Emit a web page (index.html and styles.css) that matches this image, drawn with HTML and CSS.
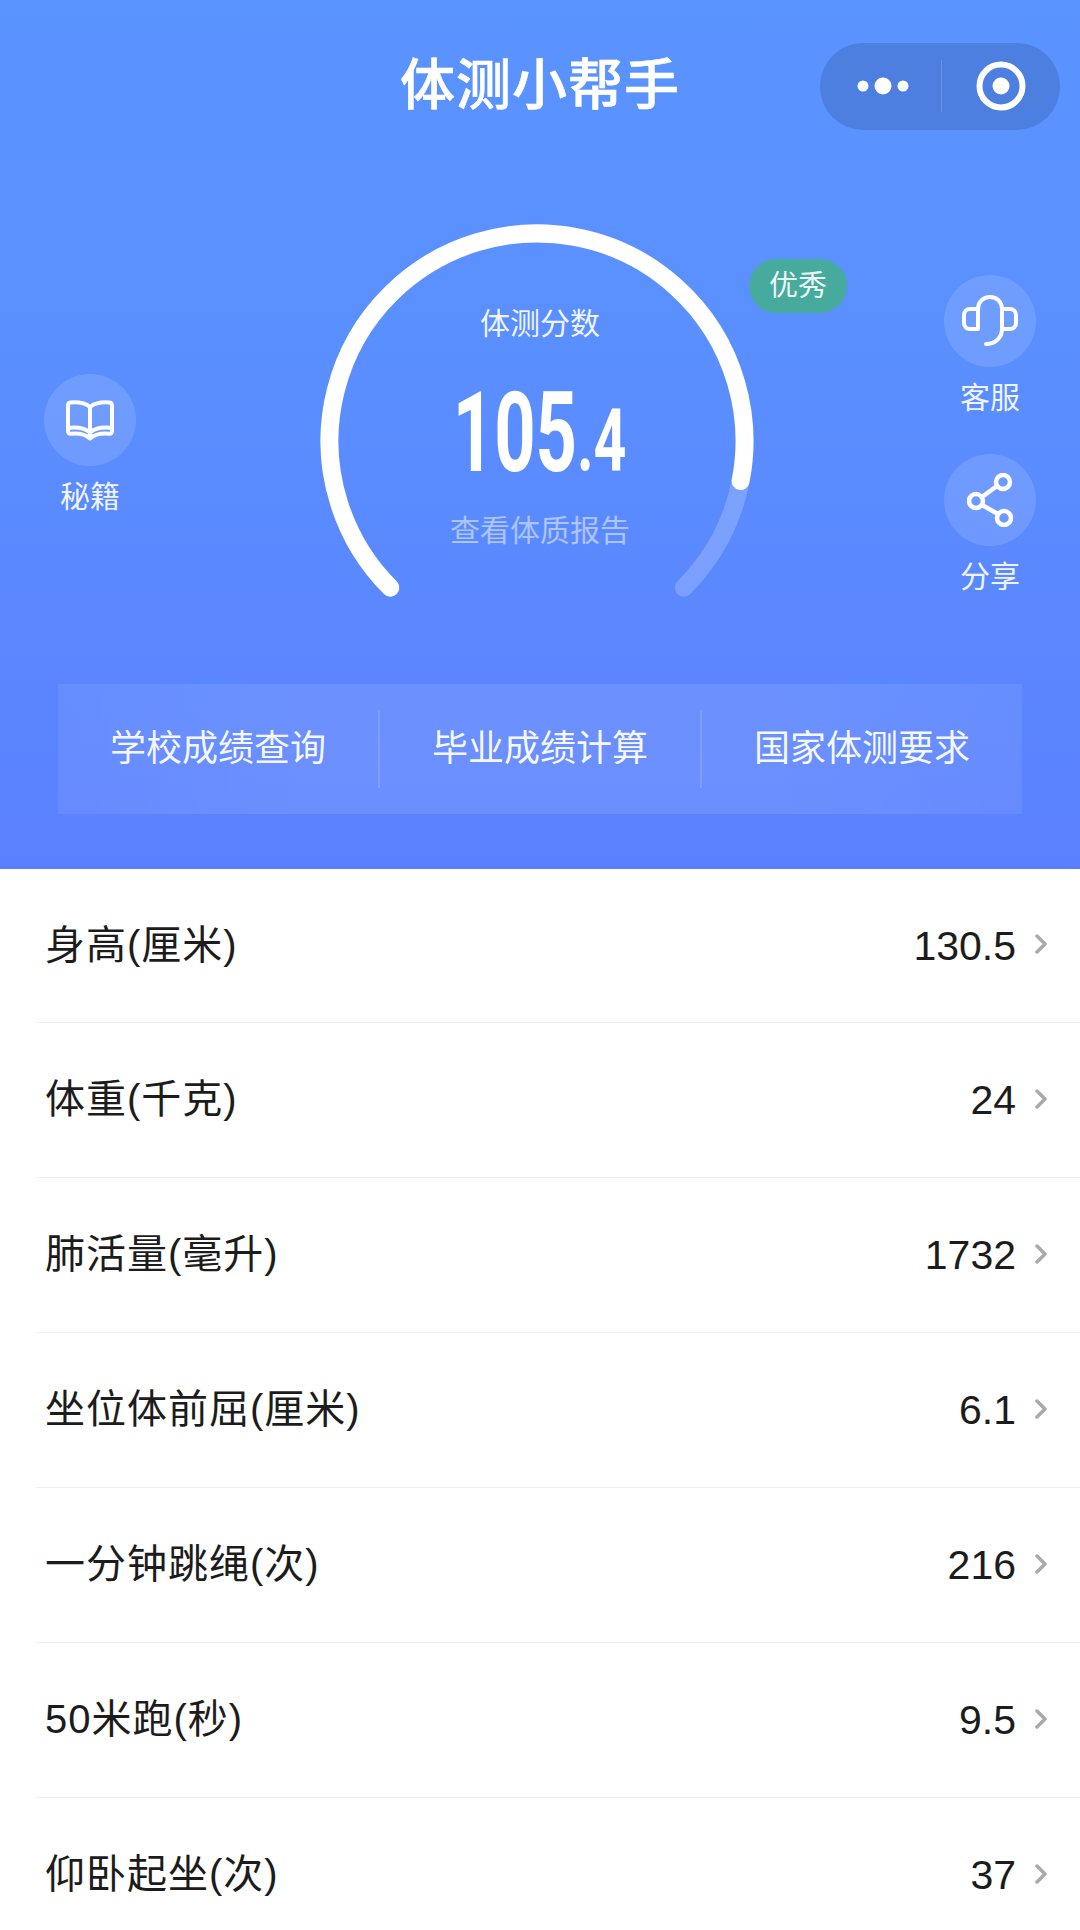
FILE: index.html
```html
<!DOCTYPE html>
<html lang="zh">
<head>
<meta charset="utf-8">
<title>体测小帮手</title>
<link rel="stylesheet" href="styles.css">
</head>
<body>
<div class="page">
  <header class="hero">
    <div class="navbar">
      <h1 class="title">体测小帮手</h1>
      <div class="capsule">
        <svg class="cap-more" viewBox="0 0 54 20"><circle cx="7" cy="10" r="5.500"/><circle cx="27" cy="10" r="8.500"/><circle cx="47" cy="10" r="5.500"/></svg>
        <span class="cap-line"></span>
        <svg class="cap-target" viewBox="0 0 50 50"><circle class="ring" cx="25" cy="25" r="21.500"/><circle class="dot" cx="25" cy="25" r="8.500"/></svg>
      </div>
    </div>
    <div class="stage">
      <div class="side side-left">
        <div class="action">
          <span class="action-icon">
            <svg viewBox="0 0 50 42" class="ico-book"><path d="M25 8C20 4 12 3 5.500 3.500Q3 3.800 3 6.500V32Q3 35 6 34.700C13 34 20 35 25 39.500C30 35 37 34 44 34.700Q47 35 47 32V6.500Q47 3.800 44.500 3.500C38 3 30 4 25 8ZM25 8V39.500M3 29C11 28 20 29.500 25 33.500C30 29.500 39 28 47 29"/></svg>
          </span>
          <span class="action-label">秘籍</span>
        </div>
      </div>
      <div class="gauge">
        <svg class="gauge-svg" viewBox="0 0 460 400">
          <path class="arc-track" d="M430.600 259A207.500 207.500 0 0 1 373.700 365.700"/>
          <path class="arc-value" d="M80.300 365.700A207.500 207.500 0 1 1 430.600 259"/>
        </svg>
        <div class="gauge-text">
          <div class="gauge-caption">体测分数</div>
          <div class="gauge-score"><span class="score-inner">105<span class="score-small">.4</span></span></div>
          <div class="gauge-link">查看体质报告</div>
        </div>
        <span class="badge">优秀</span>
      </div>
      <div class="side side-right">
        <div class="action">
          <span class="action-icon">
            <svg viewBox="0 0 58 52" class="ico-head"><path d="M17 14H9A6 6 0 0 0 3 20V28A6 6 0 0 0 9 34H17ZM17 14C17 7 22 2 29 2C36 2 41 7 41 14V34C41 42 35 49 25 49M41 14H49A6 6 0 0 1 55 20V28A6 6 0 0 1 49 34H41"/></svg>
          </span>
          <span class="action-label">客服</span>
        </div>
        <div class="action">
          <span class="action-icon">
            <svg viewBox="0 0 46 54" class="ico-share"><circle cx="36" cy="9" r="7"/><circle cx="9" cy="28" r="7"/><circle cx="37" cy="45" r="7"/><path d="M30 13L15 24M15 32L31 41"/></svg>
          </span>
          <span class="action-label">分享</span>
        </div>
      </div>
    </div>
    <nav class="panel">
      <a class="panel-item">学校成绩查询</a>
      <a class="panel-item">毕业成绩计算</a>
      <a class="panel-item">国家体测要求</a>
    </nav>
  </header>
  <ul class="list">
    <li class="row"><span class="row-name">身高(厘米)</span><span class="row-value">130.5</span><svg class="chev" viewBox="0 0 12 20"><path d="M2 2L10 10L2 18"/></svg></li>
    <li class="row"><span class="row-name">体重(千克)</span><span class="row-value">24</span><svg class="chev" viewBox="0 0 12 20"><path d="M2 2L10 10L2 18"/></svg></li>
    <li class="row"><span class="row-name">肺活量(毫升)</span><span class="row-value">1732</span><svg class="chev" viewBox="0 0 12 20"><path d="M2 2L10 10L2 18"/></svg></li>
    <li class="row"><span class="row-name">坐位体前屈(厘米)</span><span class="row-value">6.1</span><svg class="chev" viewBox="0 0 12 20"><path d="M2 2L10 10L2 18"/></svg></li>
    <li class="row"><span class="row-name">一分钟跳绳(次)</span><span class="row-value">216</span><svg class="chev" viewBox="0 0 12 20"><path d="M2 2L10 10L2 18"/></svg></li>
    <li class="row"><span class="row-name">50米跑(秒)</span><span class="row-value">9.5</span><svg class="chev" viewBox="0 0 12 20"><path d="M2 2L10 10L2 18"/></svg></li>
    <li class="row"><span class="row-name">仰卧起坐(次)</span><span class="row-value">37</span><svg class="chev" viewBox="0 0 12 20"><path d="M2 2L10 10L2 18"/></svg></li>
  </ul>
</div>
</body>
</html>
```
FILE: styles.css
```css
* { box-sizing: border-box; }
html, body { margin: 0; padding: 0; }
body {
  width: 1080px;
  height: 1930px;
  overflow: hidden;
  background: #fff;
  font-family: "Liberation Sans", "Noto Sans CJK SC", sans-serif;
}
.page { width: 1080px; height: 1930px; overflow: hidden; }

.hero {
  height: 869px;
  display: flex;
  flex-direction: column;
  background: linear-gradient(180deg, #5a94ff 0%, #5a8eff 45%, #5b80ff 100%);
  color: #fff;
}
.navbar {
  height: 172px;
  flex: none;
  position: relative;
  display: flex;
  align-items: center;
  justify-content: flex-end;
  padding: 0 20px 0 0;
}
.title {
  position: absolute;
  left: 0;
  right: 0;
  top: 50px;
  margin: 0;
  text-align: center;
  font-size: 55px;
  line-height: 70px;
  font-weight: 500;
  -webkit-text-stroke: .6px #fff;
  letter-spacing: 1px;
}
.capsule {
  width: 240px;
  height: 87px;
  border-radius: 44px;
  background: #4c7fdf;
  display: flex;
  align-items: center;
  padding: 0 0 0 36px;
}
.cap-more { width: 54px; height: 20px; fill: #fff; }
.cap-line { width: 1px; height: 52px; background: rgba(255, 255, 255, .16); margin-left: 31px; }
.cap-target { width: 50px; height: 50px; margin-left: 34px; }
.ring { fill: none; stroke: #fff; stroke-width: 6; }
.dot { fill: #fff; }

.stage {
  flex: none;
  height: 512px;
  display: flex;
  align-items: flex-start;
}
.side {
  width: 92px;
  display: flex;
  flex-direction: column;
  align-items: center;
  gap: 36px;
}
.side-left { margin-left: 44px; padding-top: 202px; }
.side-right { margin-left: auto; margin-right: 44px; padding-top: 103px; }
.action { display: flex; flex-direction: column; align-items: center; gap: 11px; }
.action-icon {
  width: 92px;
  height: 92px;
  border-radius: 50%;
  background: rgba(255, 255, 255, .13);
  display: flex;
  align-items: center;
  justify-content: center;
}
.action-icon svg { fill: none; stroke: #fff; stroke-linecap: round; stroke-linejoin: round; }
.ico-book { width: 50px; height: 42px; stroke-width: 4; }
.ico-head { width: 58px; height: 52px; stroke-width: 4; }
.ico-share { width: 46px; height: 54px; stroke-width: 4.500; }
.action-label {
  font-size: 30px;
  line-height: 40px;
  color: rgba(255, 255, 255, .92);
  white-space: nowrap;
}

.gauge {
  position: relative;
  flex: none;
  margin: 50px 0 0 174px;
  width: 460px;
  height: 400px;
}
.gauge-svg { display: block; width: 460px; height: 400px; fill: none; stroke-linecap: round; }
.arc-value { stroke: #fff; stroke-width: 18; }
.arc-track { stroke: rgba(255, 255, 255, .2); stroke-width: 18; }
.gauge-text {
  position: absolute;
  left: 0;
  right: 0;
  top: 0;
  display: flex;
  flex-direction: column;
  align-items: center;
}
.gauge-caption {
  margin-top: 80px;
  font-size: 30px;
  line-height: 44px;
  color: rgba(255, 255, 255, .92);
}
.gauge-score {
  margin-top: 28px;
  height: 118px;
  line-height: 118px;
  font-family: Roboto, "Liberation Sans", sans-serif;
  font-weight: 700;
  font-size: 111px;
  white-space: nowrap;
}
.score-inner { display: inline-block; transform: scaleX(.65); }
.score-small { font-size: 88px; }
.gauge-link {
  margin-top: 17px;
  font-size: 30px;
  line-height: 44px;
  color: rgba(255, 255, 255, .5);
}
.badge {
  position: absolute;
  left: 439px;
  top: 37px;
  width: 98px;
  height: 54px;
  border-radius: 27px;
  background: #46ab9d;
  color: rgba(255, 255, 255, .92);
  font-size: 29px;
  line-height: 54px;
  text-align: center;
}

.panel {
  flex: none;
  margin: 0 58px;
  height: 130px;
  display: flex;
  align-items: center;
  background: linear-gradient(90deg, rgba(255, 255, 255, .07), rgba(255, 255, 255, .1) 25%, rgba(255, 255, 255, .1) 75%, rgba(255, 255, 255, .07));
}
.panel-item {
  flex: 1;
  height: 78px;
  display: flex;
  align-items: center;
  justify-content: center;
  padding-bottom: 8px;
  font-size: 36px;
  color: rgba(255, 255, 255, .95);
  border-left: 2px solid rgba(255, 255, 255, .14);
}
.panel-item:first-child { border-left: 0; }

.list { list-style: none; margin: 0; padding: 0 0 0 36px; }
.row {
  height: 155px;
  display: flex;
  align-items: center;
  padding: 0 33px 0 9px;
  border-bottom: 1px solid #efefef;
  color: #1c1c1c;
}
.row:first-child { height: 154px; }
.row-name { flex: 1; font-size: 40px; line-height: 56px; letter-spacing: 1px; margin-bottom: 2px; }
.row-value { font-size: 41px; line-height: 56px; margin-right: 19px; }
.chev { width: 12px; height: 20px; margin-bottom: 3px; fill: none; stroke: #aaa; stroke-width: 3.500; stroke-linecap: round; stroke-linejoin: round; }
```
